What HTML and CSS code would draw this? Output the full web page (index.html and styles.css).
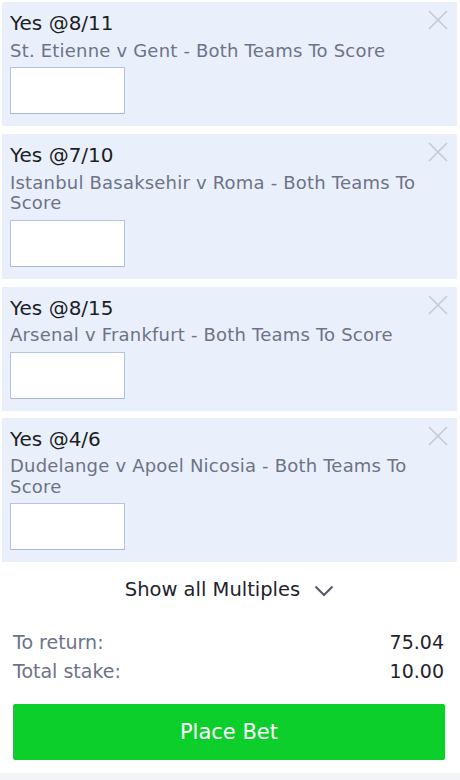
FILE: index.html
```html
<!DOCTYPE html>
<html>
<head>
<meta charset="utf-8">
<link rel="stylesheet" href="styles.css">
</head>
<body>
<div class="slip">
  <div class="bet">
    <div class="bet-title">Yes @8/11</div>
    <div class="bet-desc">St. Etienne v Gent - Both Teams To Score</div>
    <input class="stake" type="text">
    <span class="close"><svg viewBox="0 0 20 20" width="20" height="20"><path d="M1 1L19 19M19 1L1 19" stroke="#c6cad3" stroke-width="1.6" fill="none"/></svg></span>
  </div>
  <div class="bet">
    <div class="bet-title">Yes @7/10</div>
    <div class="bet-desc">Istanbul Basaksehir v Roma - Both Teams To Score</div>
    <input class="stake" type="text">
    <span class="close"><svg viewBox="0 0 20 20" width="20" height="20"><path d="M1 1L19 19M19 1L1 19" stroke="#c6cad3" stroke-width="1.6" fill="none"/></svg></span>
  </div>
  <div class="bet">
    <div class="bet-title">Yes @8/15</div>
    <div class="bet-desc">Arsenal v Frankfurt - Both Teams To Score</div>
    <input class="stake" type="text">
    <span class="close"><svg viewBox="0 0 20 20" width="20" height="20"><path d="M1 1L19 19M19 1L1 19" stroke="#c6cad3" stroke-width="1.6" fill="none"/></svg></span>
  </div>
  <div class="bet">
    <div class="bet-title">Yes @4/6</div>
    <div class="bet-desc">Dudelange v Apoel Nicosia - Both Teams To Score</div>
    <input class="stake" type="text">
    <span class="close"><svg viewBox="0 0 20 20" width="20" height="20"><path d="M1 1L19 19M19 1L1 19" stroke="#c6cad3" stroke-width="1.6" fill="none"/></svg></span>
  </div>

  <div class="multiples">
    <span class="multiples-text">Show all Multiples</span>
    <svg class="chevron" viewBox="0 0 20 12" width="20" height="12"><path d="M1.5 1.5L10 10L18.5 1.5" stroke="#535966" stroke-width="2" fill="none"/></svg>
  </div>

  <div class="summary">
    <div class="row"><span class="label">To return:</span><span class="value">75.04</span></div>
    <div class="row"><span class="label">Total stake:</span><span class="value">10.00</span></div>
  </div>

  <button class="place">Place Bet</button>
</div>
<div class="bottom-strip"></div>
</body>
</html>
```
FILE: styles.css
```css
html, body {
  margin: 0;
  padding: 0;
  background: #ffffff;
}
body {
  width: 460px;
  height: 780px;
  overflow: hidden;
  font-family: "DejaVu Sans", Verdana, sans-serif;
  display: flex;
  flex-direction: column;
}
.slip {
  padding: 2px 3px 0 2px;
  display: flex;
  flex-direction: column;
  gap: 8px;
  flex: 1;
}
.bet {
  position: relative;
  background: #eaf0fb;
  padding: 9px 8px 12px 8px;
  display: flex;
  flex-direction: column;
}
.bet:nth-child(4) {
  margin-top: -1px;
}
.bet-title {
  font-size: 20px;
  line-height: 24px;
  color: #1b1e26;
  margin-bottom: 5.5px;
}
.bet-desc {
  font-size: 18px;
  line-height: 20.5px;
  letter-spacing: 0.2px;
  color: #6d7387;
  margin-bottom: 6px;
  padding-right: 4px;
}
.stake {
  box-sizing: border-box;
  width: 115px;
  height: 47px;
  margin: 0;
  background: #ffffff;
  border: 1px solid #b3c3e4;
  border-bottom-color: #a9b7d6;
  border-radius: 1px;
  outline: none;
}
.close {
  position: absolute;
  top: 8px;
  right: 9px;
  width: 20px;
  height: 20px;
  display: block;
}
.close svg {
  display: block;
}
.multiples {
  margin-top: 7px;
  display: flex;
  justify-content: center;
  align-items: center;
  gap: 14px;
  height: 26px;
}
.multiples-text {
  font-size: 19.5px;
  line-height: 26px;
  color: #1f232c;
}
.chevron {
  display: block;
  margin-top: 2px;
}
.summary {
  margin-top: 17px;
  padding: 0 13px 0 11px;
  display: flex;
  flex-direction: column;
}
.row {
  display: flex;
  justify-content: space-between;
  font-size: 19px;
  line-height: 29px;
}
.label {
  color: #6d7387;
}
.value {
  color: #1f232c;
}
.place {
  margin: 10px 12px 0 11px;
  height: 56px;
  border: none;
  border-radius: 2px;
  background: #0dcf2b;
  color: #ffffff;
  font-family: "DejaVu Sans", Verdana, sans-serif;
  font-size: 21px;
  padding: 0;
}
.bottom-strip {
  height: 7px;
  background: #f2f4f8;
}
```
